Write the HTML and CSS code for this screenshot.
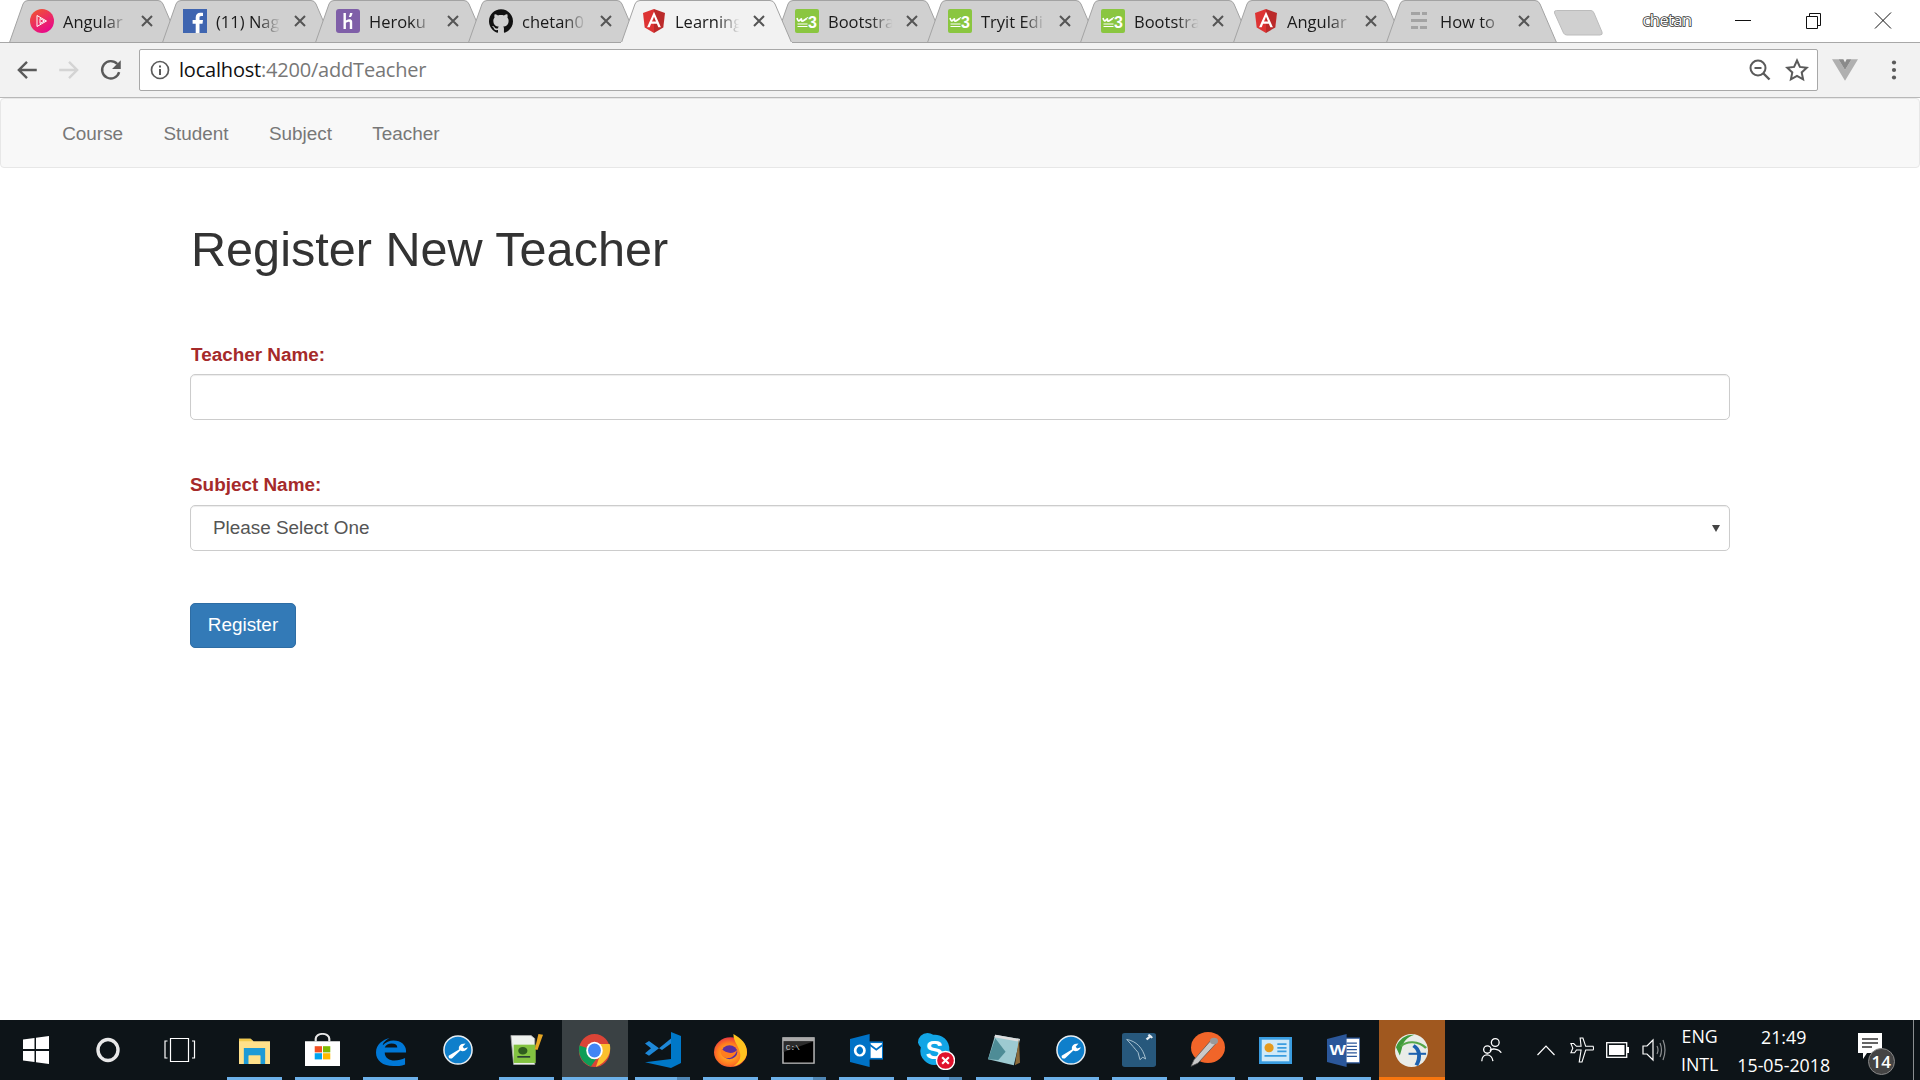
FILE: index.html
```html
<!DOCTYPE html>
<html lang="en">
<head>
<meta charset="utf-8">
<title>Learning</title>
<link rel="stylesheet" href="styles.css">
</head>
<body>
<svg class="defs" aria-hidden="true">
  <defs>
    <linearGradient id="pl" x1="0" y1="0" x2="0.6" y2="1"><stop offset="0" stop-color="#f15b2a"/><stop offset="1" stop-color="#e80a89"/></linearGradient>
    <radialGradient id="ff" cx="0.45" cy="0.55" r="0.6"><stop offset="0" stop-color="#ffcb2d"/><stop offset="0.6" stop-color="#ff7a1f"/><stop offset="1" stop-color="#e2264b"/></radialGradient>
    <symbol id="tabshape" viewBox="0 0 171 43"><path d="M.5 42.500 14 4Q15.200 .5 19 .5H149Q152.500 .5 154 4L170.500 42.500" /><path class="base" d="M0 42.500H171"/></symbol>
    <symbol id="newtab" viewBox="0 0 50 26"><path d="M3.500 .5H38Q40 .5 41 3L49 22Q50 25 47 25H14Q11.500 25 10.500 23L1.500 3Q.8 .5 3.500 .5Z"/></symbol>
    <symbol id="closex" viewBox="0 0 12 12"><path d="M1 1l10 10M11 1 1 11" fill="none" stroke="#555" stroke-width="2"/></symbol>
    <symbol id="angular" viewBox="0 0 24 24"><path fill="#dd3333" d="M12 0 1 3.900l1.700 14.500L12 24z"/><path fill="#bb2a2a" d="M12 0l11 3.900-1.700 14.500L12 24z"/><path fill="#fff" d="M12 2.800 5.100 18.200h2.600l1.400-3.500h5.800l1.400 3.500h2.600zm2 9.800h-4l2-4.800z"/></symbol>
    <symbol id="w3" viewBox="0 0 24 24"><rect width="24" height="24" rx="2" fill="#8ac640"/><path d="M2 9q1.200 4.500 3 2t1.500 0 3 0 3-2" fill="none" stroke="#fff" stroke-width="1.600"/><path d="M2.500 15h10M2.500 17.500h10" stroke="#fff" stroke-width="1"/><text x="13" y="18.500" class="w3t">3</text></symbol>
    <symbol id="wrench" viewBox="0 0 32 32"><circle cx="16" cy="16" r="15" fill="#0f7fcb" stroke="#e8eef2" stroke-width="1.600"/><path d="M6 22l11-6.500a5.500 5.500 0 0 1 3-6l4-.5-3 3.500 1.500 2 4-1.500a5.500 5.500 0 0 1-8 3.500L9.500 25q-4 .5-3.500-3z" fill="#fff"/></symbol>
  </defs>
</svg>

<header class="chrome">
  <div class="titlebar">
    <div class="tabs">
      <div class="tab"><svg class="shape"><use href="#tabshape"/></svg><div class="tab-in">
        <svg class="fav" viewBox="0 0 24 24"><circle cx="12" cy="12" r="12" fill="url(#pl)"/><path d="M7 6.500v11l9.500-5.500zM10 9.500v5l4.500-2.500z" fill="none" stroke="#fff" stroke-width="1"/></svg>
        <span class="ttl">Angular</span><svg class="x"><use href="#closex"/></svg></div></div>
      <div class="tab"><svg class="shape"><use href="#tabshape"/></svg><div class="tab-in">
        <svg class="fav" viewBox="0 0 24 24"><rect width="24" height="24" fill="#3f65b0"/><path d="M16.500 24v-9.300h3l.5-3.600h-3.500V8.900c0-1 .3-1.800 1.800-1.800H20V3.900c-.4 0-1.500-.1-2.700-.1-2.700 0-4.600 1.700-4.600 4.700v2.600H9.600v3.600h3.100V24z" fill="#fff"/></svg>
        <span class="ttl">(11) Nag</span><svg class="x"><use href="#closex"/></svg></div></div>
      <div class="tab"><svg class="shape"><use href="#tabshape"/></svg><div class="tab-in">
        <svg class="fav" viewBox="0 0 24 24"><rect width="24" height="24" rx="3" fill="#7f5fa8"/><path d="M7.500 4h2.400v7.500c2-1 4-1.500 5.200-.8 1 .6 1.100 1.500 1.100 2.500V20h-2.400v-6.500c0-.8-.6-1-1.300-.8-1 .2-1.800.6-2.600 1V20H7.500z" fill="#fff"/><path d="M14 4h2.500q-.3 2.500-1.500 4h-2.200q1-1.800 1.200-4z" fill="#fff"/></svg>
        <span class="ttl">Heroku</span><svg class="x"><use href="#closex"/></svg></div></div>
      <div class="tab"><svg class="shape"><use href="#tabshape"/></svg><div class="tab-in">
        <svg class="fav" viewBox="0 0 24 24"><path fill="#111" d="M12 .297c-6.630 0-12 5.373-12 12 0 5.303 3.438 9.800 8.205 11.385.6.113.82-.258.82-.577 0-.285-.01-1.040-.015-2.040-3.338.724-4.042-1.610-4.042-1.610C4.422 18.070 3.633 17.700 3.633 17.700c-1.087-.744.084-.729.084-.729 1.205.084 1.838 1.236 1.838 1.236 1.070 1.835 2.809 1.305 3.495.998.108-.776.417-1.305.76-1.605-2.665-.3-5.466-1.332-5.466-5.930 0-1.310.465-2.380 1.235-3.220-.135-.303-.54-1.523.105-3.176 0 0 1.005-.322 3.300 1.230.96-.267 1.980-.399 3-.405 1.020.006 2.040.138 3 .405 2.280-1.552 3.285-1.230 3.285-1.230.645 1.653.24 2.873.12 3.176.765.840 1.230 1.910 1.230 3.220 0 4.610-2.805 5.625-5.475 5.920.42.36.81 1.096.81 2.220 0 1.606-.015 2.896-.015 3.286 0 .315.21.69.825.57C20.565 22.092 24 17.592 24 12.297c0-6.627-5.373-12-12-12"/></svg>
        <span class="ttl">chetan0</span><svg class="x"><use href="#closex"/></svg></div></div>
      <div class="tab active"><svg class="shape"><use href="#tabshape"/></svg><div class="tab-in">
        <svg class="fav"><use href="#angular"/></svg>
        <span class="ttl">Learning</span><svg class="x"><use href="#closex"/></svg></div></div>
      <div class="tab"><svg class="shape"><use href="#tabshape"/></svg><div class="tab-in">
        <svg class="fav"><use href="#w3"/></svg>
        <span class="ttl">Bootstra</span><svg class="x"><use href="#closex"/></svg></div></div>
      <div class="tab"><svg class="shape"><use href="#tabshape"/></svg><div class="tab-in">
        <svg class="fav"><use href="#w3"/></svg>
        <span class="ttl">Tryit Edi</span><svg class="x"><use href="#closex"/></svg></div></div>
      <div class="tab"><svg class="shape"><use href="#tabshape"/></svg><div class="tab-in">
        <svg class="fav"><use href="#w3"/></svg>
        <span class="ttl">Bootstra</span><svg class="x"><use href="#closex"/></svg></div></div>
      <div class="tab"><svg class="shape"><use href="#tabshape"/></svg><div class="tab-in">
        <svg class="fav"><use href="#angular"/></svg>
        <span class="ttl">Angular</span><svg class="x"><use href="#closex"/></svg></div></div>
      <div class="tab"><svg class="shape"><use href="#tabshape"/></svg><div class="tab-in">
        <svg class="fav" viewBox="0 0 24 24"><path d="M4 3h9v3H4zM15 3h5v3h-5zM4 10h16v3H4zM4 17h7v3H4zM13 17h7v3h-7z" fill="#a3a3a3"/></svg>
        <span class="ttl">How to</span><svg class="x"><use href="#closex"/></svg></div></div>
    </div>
    <svg class="newtab"><use href="#newtab"/></svg>
    <span class="user">chetan</span>
    <div class="winctl">
      <svg class="wc" viewBox="0 0 70 24"><path d="M27 12.500h16" stroke="#111" fill="none"/></svg>
      <svg class="wc" viewBox="0 0 70 24"><path d="M28.500 8.500h11v12h-11zM31.500 8.500v-3h11v12h-3" stroke="#111" fill="none"/></svg>
      <svg class="wc" viewBox="0 0 70 24"><path d="M27 4.500l16 16M43 4.500l-16 16" stroke="#111" fill="none"/></svg>
    </div>
  </div>

  <div class="toolbar">
    <svg class="tbi" viewBox="0 0 24 24"><path d="M21 12H5M12 4.500 4.500 12l7.500 7.500" fill="none" stroke="#5a5a5a" stroke-width="2.200"/></svg>
    <svg class="tbi" viewBox="0 0 24 24"><path d="M3 12h16M12 4.500l7.500 7.500-7.500 7.500" fill="none" stroke="#d4d4d4" stroke-width="2.200"/></svg>
    <svg class="tbi" viewBox="0 0 24 24"><path d="M19.500 14a8 8 0 1 1-1.700-7.500" fill="none" stroke="#5a5a5a" stroke-width="2.200"/><path d="M21 3v8h-8z" fill="#5a5a5a"/></svg>
    <div class="omni">
      <svg class="info" viewBox="0 0 20 20"><circle cx="10" cy="10" r="8.500" fill="none" stroke="#5a5a5a" stroke-width="1.700"/><path d="M9 9h2v6H9zM9 5.500h2v2H9z" fill="#5a5a5a"/></svg>
      <span class="url"><b>localhost</b>:4200/addTeacher</span>
      <svg class="omi" viewBox="0 0 24 24"><circle cx="10" cy="10" r="7.500" fill="none" stroke="#5a5a5a" stroke-width="2"/><path d="M15.500 15.500l6 6" stroke="#5a5a5a" stroke-width="2.400"/><path d="M6.500 10h7" stroke="#5a5a5a" stroke-width="2"/></svg>
      <svg class="omi star" viewBox="0 0 24 24"><path d="M12 2.500l2.900 6.400 6.900.8-5.100 4.700 1.400 6.900-6.100-3.500-6.100 3.500 1.400-6.900-5.100-4.700 6.900-.8z" fill="none" stroke="#5a5a5a" stroke-width="2"/></svg>
    </div>
    <svg class="vue" viewBox="0 0 24 20"><path d="M0 0h6l6 10 6-10h6L12 20z" fill="#b0b0b0"/><path d="M6 0h4.500L12 3l1.500-3H18l-6 10z" fill="#8a8a8a"/></svg>
    <svg class="menu" viewBox="0 0 6 24"><circle cx="3" cy="4.500" r="2.100" fill="#5a5a5a"/><circle cx="3" cy="12" r="2.100" fill="#5a5a5a"/><circle cx="3" cy="19.500" r="2.100" fill="#5a5a5a"/></svg>
  </div>
</header>

<nav class="navbar">
  <a class="navlink" href="#">Course</a>
  <a class="navlink" href="#">Student</a>
  <a class="navlink" href="#">Subject</a>
  <a class="navlink" href="#">Teacher</a>
</nav>

<main class="page">
  <h1 class="title">Register New Teacher</h1>
  <form class="form">
    <label class="lbl lbl-first" for="tn">Teacher Name:</label>
    <input class="ctl" id="tn" type="text">
    <label class="lbl lbl-next" for="sn">Subject Name:</label>
    <div class="selwrap">
      <select class="ctl sel" id="sn"><option>Please Select One</option></select>
      <svg class="arrow" viewBox="0 0 8 7"><path d="M0 0h8L4 7z" fill="#444"/></svg>
    </div>
    <button class="btn" type="button">Register</button>
  </form>
</main>

<footer class="taskbar">
  <div class="sys">
    <svg viewBox="0 0 26 30" class="i26"><path d="M0 4.500 11.500 3v11H0zM13 2.800 26 1v13H13zM0 16h11.500v11L0 25.500zM13 16h13v13l-13-1.800z" fill="#fff"/></svg>
  </div>
  <div class="sys"><svg viewBox="0 0 26 30" class="i26"><ellipse cx="13" cy="15" rx="10" ry="10.500" fill="none" stroke="#e8e8e8" stroke-width="3.400"/></svg></div>
  <div class="sys"><svg viewBox="0 0 32 26" class="i32"><path d="M6.500 1.500h18v23h-18z" fill="none" stroke="#fff" stroke-width="1.200"/><path d="M3.500 4H1v17h2.500M28 4h2.500v17H28" fill="none" stroke="#fff" stroke-width="1.200"/></svg></div>
  <div class="sys-gap"></div>

  <div class="tb on"><svg class="s-explorer" preserveAspectRatio="none" viewBox="0 0 32 32"><path d="M0 2h12l3 3h17v27H0z" fill="#ffe08a"/><path d="M0 2h12l2 3H0z" fill="#f2c94c"/><path d="M5 13h22v19h-5V22H10v10H5z" fill="#1d9ad6"/><rect x="10" y="22" width="12" height="10" fill="#ffe08a"/></svg></div>
  <div class="tb on"><svg class="s-store" preserveAspectRatio="none" viewBox="0 0 36 40"><path d="M11 10V7a7 6 0 0 1 14 0v3" fill="none" stroke="#e8e8e8" stroke-width="2.200"/><rect y="10" width="36" height="30" fill="#fff"/><rect x="10" y="16" width="7.500" height="7.500" fill="#f25022"/><rect x="18.500" y="16" width="7.500" height="7.500" fill="#7fba00"/><rect x="10" y="24.500" width="7.500" height="7.500" fill="#00a4ef"/><rect x="18.500" y="24.500" width="7.500" height="7.500" fill="#ffb900"/></svg></div>
  <div class="tb on"><svg class="s-edge" preserveAspectRatio="none" viewBox="0 0 32 40"><path d="M31 23H9c0 7 5 10 10 10 4 0 8-1 11-3v8c-4 2-8 2-12 2C7 40 0 33 0 23 0 13 7 7 14 5 9 8 7 12 7 14c3-4 7-6 11-6 8 0 13 6 13 13z M22 17c0-3-2-5-6-5-3 0-6 2-7 5z" fill="#0078d7" fill-rule="evenodd"/></svg></div>
  <div class="tb"><svg class="s-round" viewBox="0 0 32 32"><use href="#wrench"/></svg></div>
  <div class="tb on"><svg class="s-npp" preserveAspectRatio="none" viewBox="0 0 36 42"><path d="M1 2h22l4 4v34H4z" fill="#eef2ee" stroke="#aaa"/><rect x="4" y="14" width="24" height="24" fill="#83c341"/><circle cx="14" cy="22" r="5" fill="#2f5d1e"/><path d="M8 30h14" stroke="#233" stroke-width="2"/><path d="M31 0l5 1-6 20-3-1z" fill="#e6a623"/></svg></div>
  <div class="tb chrome-on"><svg class="s-chrome" preserveAspectRatio="none" viewBox="0 0 36 40"><ellipse cx="18" cy="20" rx="17" ry="20" fill="#db4437"/><path d="M18 20 1.500 14C0 22 2 34 14 39.500L24 24z" fill="#0f9d58"/><path d="M18 12h16.500c2 8 0 20-15 28l5-16z" fill="#fbc02d"/><ellipse cx="18" cy="20" rx="9" ry="10.500" fill="#fff"/><ellipse cx="18" cy="20" rx="7" ry="8.500" fill="#4285f4"/></svg></div>
  <div class="tb split"><svg class="s-code" preserveAspectRatio="none" viewBox="0 0 36 44"><path d="M26 0 36 5v33l-10 6-26-7 26-4V0z" fill="#0078c8"/><path d="M26 12 12 22l14 11z" fill="#0d1418"/><path d="M0 14l4-3 10 9-10 9-4-3 6-6z" fill="#1e88d8"/><path d="M14 20 26 8v6L17 22z" fill="#1e88d8"/></svg></div>
  <div class="tb on"><svg class="s-chrome" preserveAspectRatio="none" viewBox="0 0 34 40"><ellipse cx="17" cy="22" rx="17" ry="18" fill="url(#ff)"/><path d="M20 0c8 5 14 12 14 22 0 8-6 15-14 17 8-6 8-13 6-19-1-6-6-11-6-20z" fill="#ffc21f"/><ellipse cx="16" cy="22" rx="8" ry="8.500" fill="#5d2f9e"/><path d="M7 17c6 8 14 7 17 2-2 8-7 11-11 10-4 0-7-4-6-12z" fill="#ff7d1f"/></svg></div>
  <div class="tb split"><svg class="s-cmd" preserveAspectRatio="none" viewBox="0 0 34 32"><rect x="1" y="1" width="32" height="30" fill="#000" stroke="#bcbcbc" stroke-width="1.500"/><rect x="1" y="1" width="32" height="4" fill="#aaa"/><path d="M1 18 33 5H1z" fill="#555" opacity=".5"/><text x="4" y="15" class="cmdt">C:\</text></svg></div>
  <div class="tb on"><svg class="s-chrome" preserveAspectRatio="none" viewBox="0 0 32 40"><path d="M0 6 19 0v40L0 34z" fill="#0072c6"/><rect x="19" y="10" width="13" height="20" fill="#fff" stroke="#0072c6" stroke-width="2"/><path d="M19 13l6.500 6 6.500-6" fill="none" stroke="#0072c6" stroke-width="2"/><ellipse cx="9.500" cy="20" rx="4.500" ry="6" fill="none" stroke="#fff" stroke-width="2.600"/></svg></div>
  <div class="tb split"><svg class="s-skype" viewBox="0 0 40 40"><path d="M11 1a10 10 0 0 1 6 2 15 15 0 0 1 17 16 10 10 0 0 1 1 5 10 10 0 0 1-12 10A15 15 0 0 1 4 16 10 10 0 0 1 1 11 10 10 0 0 1 11 1z" fill="#12a5e5"/><text x="9" y="28" class="skt">S</text><circle cx="30" cy="30" r="9.500" fill="#e0112b" stroke="#fff" stroke-width="1.500"/><path d="M26.500 26.500l7 7M33.500 26.500l-7 7" stroke="#fff" stroke-width="2.200"/></svg></div>
  <div class="tb on"><svg class="s-npp" preserveAspectRatio="none" viewBox="0 0 32 38"><path d="M8 1 32 6 26 37 1 30z" fill="#9dcad1"/><path d="M8 1 32 6 31 9 7 4z" fill="#ddd"/><path d="M1 30 8 5l10 16-7 10z" fill="#4e8c96"/><path d="M31 6l1 28-5 3z" fill="#8a6a3a"/></svg></div>
  <div class="tb on"><svg class="s-round" viewBox="0 0 32 32"><use href="#wrench"/></svg></div>
  <div class="tb on"><svg class="s-sql" preserveAspectRatio="none" viewBox="0 0 36 42"><rect width="36" height="42" rx="3" fill="#27587c"/><path d="M5 8c10 2 17 10 20 24l-3-2-3 3-2-9C14 20 10 14 5 8z" fill="none" stroke="#b8cfdc" stroke-width="1"/><path d="M26 8l5-5M28 2l4 4" stroke="#e8eef2" stroke-width="2.500"/></svg></div>
  <div class="tb on"><svg class="s-code" preserveAspectRatio="none" viewBox="0 0 36 44"><ellipse cx="19" cy="19" rx="17" ry="19" fill="#f16529"/><path d="M2 42l3-8 17-24 5 4L9 38z" fill="#c9c9c9" stroke="#555" stroke-width=".8"/><circle cx="25" cy="11" r="4" fill="#999"/></svg></div>
  <div class="tb on"><svg class="s-cmd" preserveAspectRatio="none" viewBox="0 0 36 30"><rect width="36" height="30" fill="#3a9de0"/><rect x="3" y="3" width="30" height="24" fill="#cfe9f8"/><circle cx="11" cy="12" r="5" fill="#e69a1c"/><path d="M20 8h10M20 12h10M20 16h10M6 21h24" stroke="#3a9de0" stroke-width="2"/></svg></div>
  <div class="tb on"><svg class="s-chrome" preserveAspectRatio="none" viewBox="0 0 32 40"><rect x="13" y="5" width="19" height="30" fill="#fff" stroke="#2b579a" stroke-width="1.500"/><path d="M19 11h10M19 15h10M19 19h10M19 23h10M19 27h10" stroke="#2b579a" stroke-width="1.500"/><path d="M0 6 19 0v40L0 34z" fill="#2b579a"/><text x="2.500" y="26" class="wt">W</text></svg></div>
  <div class="tb vpn"><svg class="s-chrome" preserveAspectRatio="none" viewBox="0 0 34 40"><ellipse cx="17" cy="20" rx="17" ry="20" fill="#e9ece8"/><path d="M1 16C4 6 12 0 20 1 12 4 8 10 7 18l-2 8z" fill="#3f9a3a"/><path d="M6 15c6-7 18-7 26 2" fill="none" stroke="#55a84a" stroke-width="2.600"/><path d="M19 14c6 4 8 14 3 24" fill="none" stroke="#1d62b0" stroke-width="4"/><path d="M14 24h18" stroke="#1d62b0" stroke-width="2.500"/></svg></div>

  <div class="tray p"><svg viewBox="0 0 24 28" class="tr"><circle cx="15.500" cy="6" r="4.200" fill="none" stroke="#fff" stroke-width="1.400"/><path d="M10 15c1-3 9-3 12 2" fill="none" stroke="#fff" stroke-width="1.400"/><circle cx="7" cy="13.500" r="4" fill="none" stroke="#fff" stroke-width="1.400"/><path d="M1 26c0-9 11-9 12 0" fill="none" stroke="#fff" stroke-width="1.400"/></svg></div>
  <div class="tray n"><svg viewBox="0 0 20 12" class="caret"><path d="M1.500 11 10 2l8.500 9" fill="none" stroke="#fff" stroke-width="1.200"/></svg></div>
  <div class="tray n"><svg viewBox="0 0 26 28" class="tr"><path d="M11 1h3l3 9h8q1 2.500 0 4h-8l-4 13h-3l2-13H7l-2 3H1l2-5-2-5h3l3 3h5z" fill="none" stroke="#fff" stroke-width="1.200"/></svg></div>
  <div class="tray n"><svg viewBox="0 0 24 16" class="bat"><rect x=".7" y=".7" width="20" height="14.600" fill="none" stroke="#fff" stroke-width="1.300"/><rect x="3" y="3" width="15.500" height="10" fill="#fff"/><rect x="21" y="5" width="2" height="6" fill="#fff"/></svg></div>
  <div class="tray v"><svg viewBox="0 0 24 24" class="tr"><path d="M1 8h4l6-6v20l-6-6H1z" fill="none" stroke="#fff" stroke-width="1.200"/><path d="M15 8q2 4 0 8M18 5q3 7 0 14M21 2q4 10 0 20" fill="none" stroke="#8c8f91" stroke-width="1.200"/></svg></div>
  <div class="ime"><span>ENG</span><span>INTL</span></div>
  <div class="clock"><span>21:49</span><span>15-05-2018</span></div>
  <div class="notif">
    <svg viewBox="0 0 24 30" class="nf"><path d="M0 0h24v20H9l-4 6v-6H0z" fill="#fff"/><path d="M4 6h16M4 10h16M4 14h10" stroke="#333" stroke-width="1.400"/></svg>
    <span class="badge">14</span>
  </div>
  <div class="desk"></div>
</footer>
</body>
</html>
```

FILE: styles.css
```css
html, body { margin: 0; padding: 0; }
body { width: 1920px; height: 1080px; overflow: hidden; background: #fff; display: flex; flex-direction: column; font-family: "Liberation Sans", Arial, sans-serif; }
.defs { position: absolute; width: 0; height: 0; }
.w3t { font: bold 16px "Liberation Sans", sans-serif; fill: #fff; }
.cmdt { font: 8px "Liberation Mono", monospace; fill: #ddd; }
.skt { font: bold 28px "Liberation Sans", sans-serif; fill: #fff; }
.wt { font: bold 17px "Liberation Sans", sans-serif; fill: #fff; }

.chrome { flex: none; }
.titlebar { height: 42px; display: flex; align-items: flex-start; background: #fff; border-bottom: 1px solid #a8a8a8; }
.tabs { display: flex; padding-left: 9px; height: 43px; flex: none; }
.tab { display: grid; width: 171px; height: 43px; margin-right: -18px; position: relative; }
.tab > * { grid-area: 1 / 1; }
.shape { width: 171px; height: 43px; fill: #d0d0d0; stroke: #a3a3a3; stroke-width: 1; }
.base { stroke: var(--base, #a3a3a3); }
.tab.active { z-index: 2; --base: #f2f2f2; }
.tab.active .shape { fill: #f2f2f2; }
.tab-in { display: flex; align-items: center; padding-left: 21px; height: 42px; position: relative; }
.fav { width: 24px; height: 24px; flex: none; }
.ttl { width: 68px; margin-left: 9px; flex: none; white-space: nowrap; overflow: hidden; font: 16.500px "Open Sans", sans-serif; color: #1a1a1a; -webkit-mask-image: linear-gradient(90deg, #000 62%, transparent 95%); mask-image: linear-gradient(90deg, #000 62%, transparent 95%); }
.x { width: 12px; height: 12px; margin-left: 10px; flex: none; }
.newtab { width: 50px; height: 26px; margin: 10px 0 0 14px; fill: #d0d0d0; stroke: #bcbcbc; flex: none; }
.user { width: 52px; margin: 10px 0 0 38px; text-align: center; font: 16.500px "Open Sans", sans-serif; line-height: 20px; color: #fff; -webkit-text-stroke: 1.600px #333; paint-order: stroke fill; letter-spacing: -.6px; flex: none; }
.winctl { display: flex; margin-left: auto; padding: 8px 2px 0 0; }
.wc { width: 70px; height: 24px; }

.toolbar { height: 55px; box-sizing: border-box; background: #f2f2f2; border-bottom: 1px solid #b8b8b8; display: flex; align-items: center; padding: 0 0 0 14px; }
.tbi { width: 26px; height: 26px; margin-right: 16px; flex: none; }
.toolbar .tbi:nth-child(3) { margin-right: 15px; }
.omni { width: 1679px; height: 42px; box-sizing: border-box; margin-top: -1px; background: #fff; border: 1px solid #a8a8a8; border-radius: 2px; display: flex; align-items: center; padding: 0 8px 0 10px; flex: none; }
.info { width: 20px; height: 20px; flex: none; }
.url { margin-left: 9px; font: 20px "Open Sans", sans-serif; color: #777; letter-spacing: -.2px; flex: 1; }
.url b { font-weight: 400; color: #111; }
.omi { width: 24px; height: 24px; flex: none; margin-left: 13px; }
.vue { width: 26px; height: 24px; margin-left: 14px; flex: none; }
.menu { width: 6px; height: 24px; margin-left: 33px; flex: none; }

.navbar { flex: none; height: 70px; box-sizing: border-box; background: #f8f8f8; border: 1px solid #e7e7e7; border-radius: 4px; display: flex; align-items: center; padding: 2px 0 0 41px; }
.navlink { padding: 0 20.200px; font-size: 18.900px; color: #777; text-decoration: none; }

.page { flex: 1; padding: 55px 0 0 190px; width: 1540px; }
.title { margin: 0 0 66px 1px; font-size: 48.600px; line-height: 53px; font-weight: 400; color: #333; }
.form { display: flex; flex-direction: column; align-items: flex-start; }
.lbl { font-size: 18.900px; font-weight: 700; line-height: 25px; color: #a52a2a; margin-bottom: 7px; }
.lbl-first { margin-left: 1px; }
.lbl-next { margin-top: 52px; margin-bottom: 8px; }
.ctl { width: 100%; height: 46px; box-sizing: border-box; border: 1px solid #ccc; border-radius: 5px; background: #fff; font: 18.900px "Liberation Sans", sans-serif; color: #555; padding: 7px 15px; box-shadow: inset 0 1px 1px rgba(0,0,0,.075); }
.selwrap { display: grid; width: 100%; align-items: center; justify-items: end; }
.selwrap > * { grid-area: 1 / 1; }
.sel { -webkit-appearance: none; appearance: none; padding: 5px 15px 7px 22px; }
.arrow { width: 8px; height: 7px; margin-right: 10px; pointer-events: none; }
.btn { margin-top: 52px; width: 106px; height: 45px; border: 1px solid #2e6da4; border-radius: 5px; background: #337ab7; color: #fff; font: 18.900px "Liberation Sans", sans-serif; padding: 0 0 2px; }

.taskbar { flex: none; height: 60px; background: #0d1418; display: flex; align-items: stretch; color: #fff; font-family: "Open Sans", sans-serif; }
.sys { width: 72px; display: flex; align-items: center; justify-content: center; }
.sys-gap { width: 4px; }
.i26 { width: 26px; height: 30px; }
.i32 { width: 32px; height: 26px; }
.tb { width: 68.100px; display: flex; align-items: center; justify-content: center; flex: none; }
.s-explorer { width: 31px; height: 27px; }
.s-store { width: 35px; height: 33px; margin-top: -1px; }
.s-edge { width: 31px; height: 32px; margin-left: 2px; }
.s-round { width: 30px; height: 30px; }
.s-npp { width: 33px; height: 32px; }
.s-chrome { width: 33px; height: 33px; }
.s-code { width: 36px; height: 36px; }
.s-cmd { width: 33px; height: 27px; }
.s-skype { width: 38px; height: 38px; margin: 2px 0 0 2px; }
.s-sql { width: 34px; height: 34px; }
.tb.on { background: linear-gradient(#6cb0e8, #6cb0e8) center bottom / 55px 3px no-repeat; }
.tb.split { background: linear-gradient(90deg, #6cb0e8 42px, #4f86b4 42px) center bottom / 55px 3px no-repeat; }
.tb.chrome-on { background: linear-gradient(#6cb0e8, #6cb0e8) center bottom / 66px 3px no-repeat, linear-gradient(#3a4144, #3a4144) center / 66px 100% no-repeat; }
.tb.vpn { background: linear-gradient(#f7760f, #f7760f) center bottom / 66px 3px no-repeat, linear-gradient(#a0581f, #a0581f) center / 66px 100% no-repeat; }
.tray { display: flex; align-items: center; justify-content: center; flex: none; }
.tray.p { width: 72px; margin-left: 10px; }
.tray.n { width: 36px; }
.tray.v { width: 36px; }
.tr { width: 24px; height: 26px; }
.caret { width: 20px; height: 12px; }
.bat { width: 24px; height: 16px; }
.ime, .clock { display: flex; flex-direction: column; align-items: center; justify-content: center; gap: 6px; font-size: 17.800px; line-height: 22px; flex: none; }
.ime { width: 56px; }
.clock { width: 112px; padding-top: 1px; }
.notif { width: 60px; display: flex; align-items: center; justify-content: center; position: relative; flex: none; }
.nf { width: 24px; height: 30px; margin-top: -4px; }
.badge { position: absolute; left: 28px; top: 28px; width: 27px; height: 27px; line-height: 25px; border-radius: 50%; background: #444; border: 1px solid #888; box-sizing: border-box; text-align: center; font-size: 17px; font-weight: 600; }
.desk { width: 1px; margin-left: 13px; background: #8a8e90; }
```
